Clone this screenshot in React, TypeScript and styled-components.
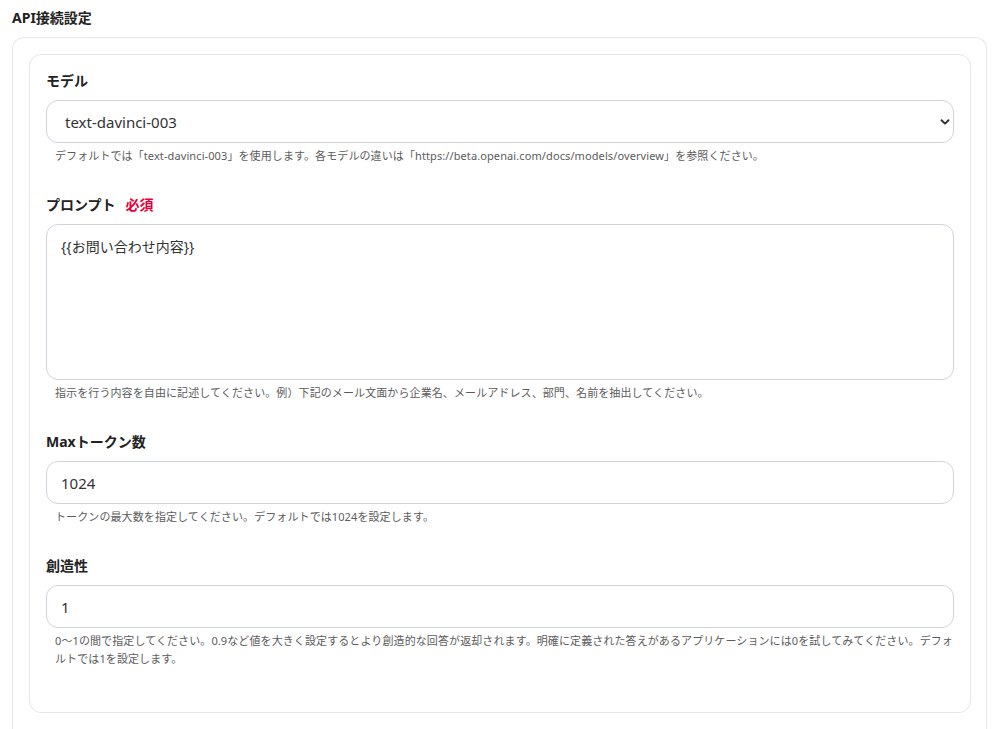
import styled, { createGlobalStyle } from "styled-components";

const fontStack = `"Noto Sans", "Noto Sans CJK JP", sans-serif`;

const GlobalStyle = createGlobalStyle`
  html, body {
    margin: 0;
    padding: 0;
    background: #ffffff;
  }
  body {
    font-family: ${fontStack};
    color: #222222;
  }
  * {
    box-sizing: border-box;
  }
`;

const Page = styled.div`
  padding: 8px 16px 0 12px;
`;

const Title = styled.h2`
  margin: 0 0 9px;
  font-size: 14px;
  line-height: 20px;
  font-weight: 700;
  color: #222222;
`;

const OuterCard = styled.section`
  border: 1px solid #e3e6eb;
  border-bottom: none;
  border-radius: 12px 12px 0 0;
  padding: 16px 15px 16px 16px;
`;

const InnerCard = styled.div`
  border: 1px solid #e3e6eb;
  border-radius: 12px;
  padding: 16px 16px 44px;
  display: flex;
  flex-direction: column;
  gap: 30px;
`;

const Field = styled.div`
  display: flex;
  flex-direction: column;
`;

const Label = styled.label`
  display: flex;
  align-items: center;
  gap: 10px;
  font-size: 14px;
  line-height: 20px;
  font-weight: 700;
  color: #222222;
  margin-bottom: 9px;
`;

const Required = styled.span`
  color: #e6003c;
  font-size: 14px;
  font-weight: 700;
`;

const controlBase = `
  display: block;
  width: 100%;
  margin: 0;
  border: 1px solid #cfd4dc;
  border-radius: 12px;
  background: #ffffff;
  font-family: ${fontStack};
  color: #333333;
  outline: none;
`;

const SelectWrap = styled.div`
  position: relative;
`;

const Select = styled.select`
  ${controlBase}
  height: 43px;
  padding: 0 40px 0 18px;
  font-size: 15px;
  appearance: none;
  -webkit-appearance: none;
`;

const Chevron = styled.svg`
  position: absolute;
  right: 4px;
  top: 17px;
  width: 10px;
  height: 10px;
  pointer-events: none;
`;

const Input = styled.input`
  ${controlBase}
  height: 43px;
  padding: 0 14px;
  font-size: 15px;
`;

const TextArea = styled.textarea`
  ${controlBase}
  height: 156px;
  padding: 12px 14px;
  font-size: 14px;
  line-height: 20px;
  resize: none;
`;

const Help = styled.p`
  margin: 4px 0 0;
  padding-left: 9px;
  font-size: 11px;
  line-height: 18px;
  letter-spacing: 0.1px;
  color: #5c5c5c;
`;

export default function App() {
  return (
    <Page>
      <GlobalStyle />
      <Title>API接続設定</Title>
      <OuterCard>
        <InnerCard>
          <Field>
            <Label>モデル</Label>
            <SelectWrap>
              <Select defaultValue="text-davinci-003">
                <option value="text-davinci-003">text-davinci-003</option>
                <option value="text-curie-001">text-curie-001</option>
              </Select>
              <Chevron viewBox="0 0 10 10">
                <path
                  d="M1.5 3.2 L5 6.6 L8.5 3.2"
                  fill="none"
                  stroke="#333"
                  strokeWidth="2"
                  strokeLinecap="round"
                  strokeLinejoin="round"
                />
              </Chevron>
            </SelectWrap>
            <Help>
              デフォルトでは「text-davinci-003」を使用します。各モデルの違いは「https://beta.openai.com/docs/models/overview」を参照ください。
            </Help>
          </Field>

          <Field>
            <Label>
              プロンプト<Required>必須</Required>
            </Label>
            <TextArea defaultValue="{{お問い合わせ内容}}" />
            <Help>
              指示を行う内容を自由に記述してください。例）下記のメール文面から企業名、メールアドレス、部門、名前を抽出してください。
            </Help>
          </Field>

          <Field>
            <Label>Maxトークン数</Label>
            <Input defaultValue="1024" />
            <Help>トークンの最大数を指定してください。デフォルトでは1024を設定します。</Help>
          </Field>

          <Field>
            <Label>創造性</Label>
            <Input defaultValue="1" />
            <Help>
              0〜1の間で指定してください。0.9など値を大きく設定するとより創造的な回答が返却されます。明確に定義された答えがあるアプリケーションには0を試してみてください。デフォルトでは1を設定します。
            </Help>
          </Field>
        </InnerCard>
      </OuterCard>
    </Page>
  );
}
